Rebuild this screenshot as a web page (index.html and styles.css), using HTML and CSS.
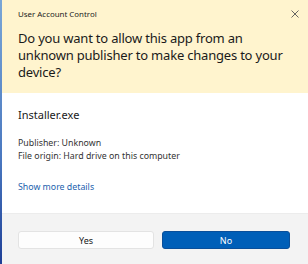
FILE: index.html
```html
<!DOCTYPE html>
<html>
<head>
<meta charset="utf-8">
<link rel="stylesheet" href="styles.css">
</head>
<body>
<div class="screen">
  <div class="edge"></div>
  <div class="dialog">
    <div class="header">
      <div class="titlebar">
        <span class="title">User Account Control</span>
        <svg class="close" width="8" height="8" viewBox="0 0 8 8"><path d="M0.5 0.5L7.5 7.5M7.5 0.5L0.5 7.5" stroke="#555" stroke-width="0.9" fill="none"/></svg>
      </div>
      <div class="question">Do you want to allow this app from an unknown publisher to make changes to your device?</div>
    </div>
    <div class="content">
      <div class="app">Installer.exe</div>
      <div class="meta">
        <div>Publisher: Unknown</div>
        <div>File origin: Hard drive on this computer</div>
      </div>
      <div class="more">Show more details</div>
    </div>
    <div class="footer">
      <button class="btn yes">Yes</button>
      <button class="btn no">No</button>
    </div>
  </div>
</div>
</body>
</html>
```
FILE: styles.css
```css
html, body {
  margin: 0;
  padding: 0;
}
body {
  width: 308px;
  height: 264px;
  overflow: hidden;
  font-family: "Noto Sans", "Open Sans", sans-serif;
}
.screen {
  display: flex;
  height: 264px;
}
.edge {
  width: 2px;
  flex: none;
  background: linear-gradient(#7aa6d6, #4a78c0 60%, #1e3f96);
}
.dialog {
  flex: 1;
  display: flex;
  flex-direction: column;
  background: #fff;
}
.header {
  height: 93px;
  flex: none;
  box-sizing: border-box;
  background: #fff4ce;
  padding: 8px 8px 0 16px;
}
.titlebar {
  display: flex;
  justify-content: space-between;
  align-items: center;
  height: 12px;
}
.title {
  font-size: 7.9px;
  color: #222;
}
.close {
  margin-right: 1px;
}
.question {
  margin-top: 10px;
  font-size: 13px;
  letter-spacing: -0.2px;
  line-height: 17px;
  color: #1a1a1a;
  padding-right: 4px;
}
.content {
  flex: 1;
  padding: 14px 16px 0 16px;
}
.app {
  font-size: 11px;
  line-height: 16px;
  color: #1a1a1a;
}
.meta {
  margin-top: 14px;
  font-size: 8.8px;
  line-height: 13px;
  color: #333;
}
.more {
  margin-top: 18px;
  font-size: 8.8px;
  line-height: 13px;
  color: #1b5fae;
}
.footer {
  height: 51px;
  flex: none;
  background: #f3f3f3;
  border-top: 1px solid #ececec;
  box-sizing: border-box;
  display: grid;
  grid-template-columns: 136px 128px;
  gap: 8px;
  padding: 17px 16px 0 16px;
  align-items: start;
}
.btn {
  height: 18px;
  border-radius: 3px;
  font-family: "Noto Sans", "Open Sans", sans-serif;
  font-size: 9px;
  padding: 0;
}
.yes {
  background: #fdfdfd;
  border: 1px solid #e3e3e3;
  color: #1a1a1a;
}
.no {
  background: #005fb8;
  border: 1px solid #0a4f9a;
  color: #fff;
}
```
